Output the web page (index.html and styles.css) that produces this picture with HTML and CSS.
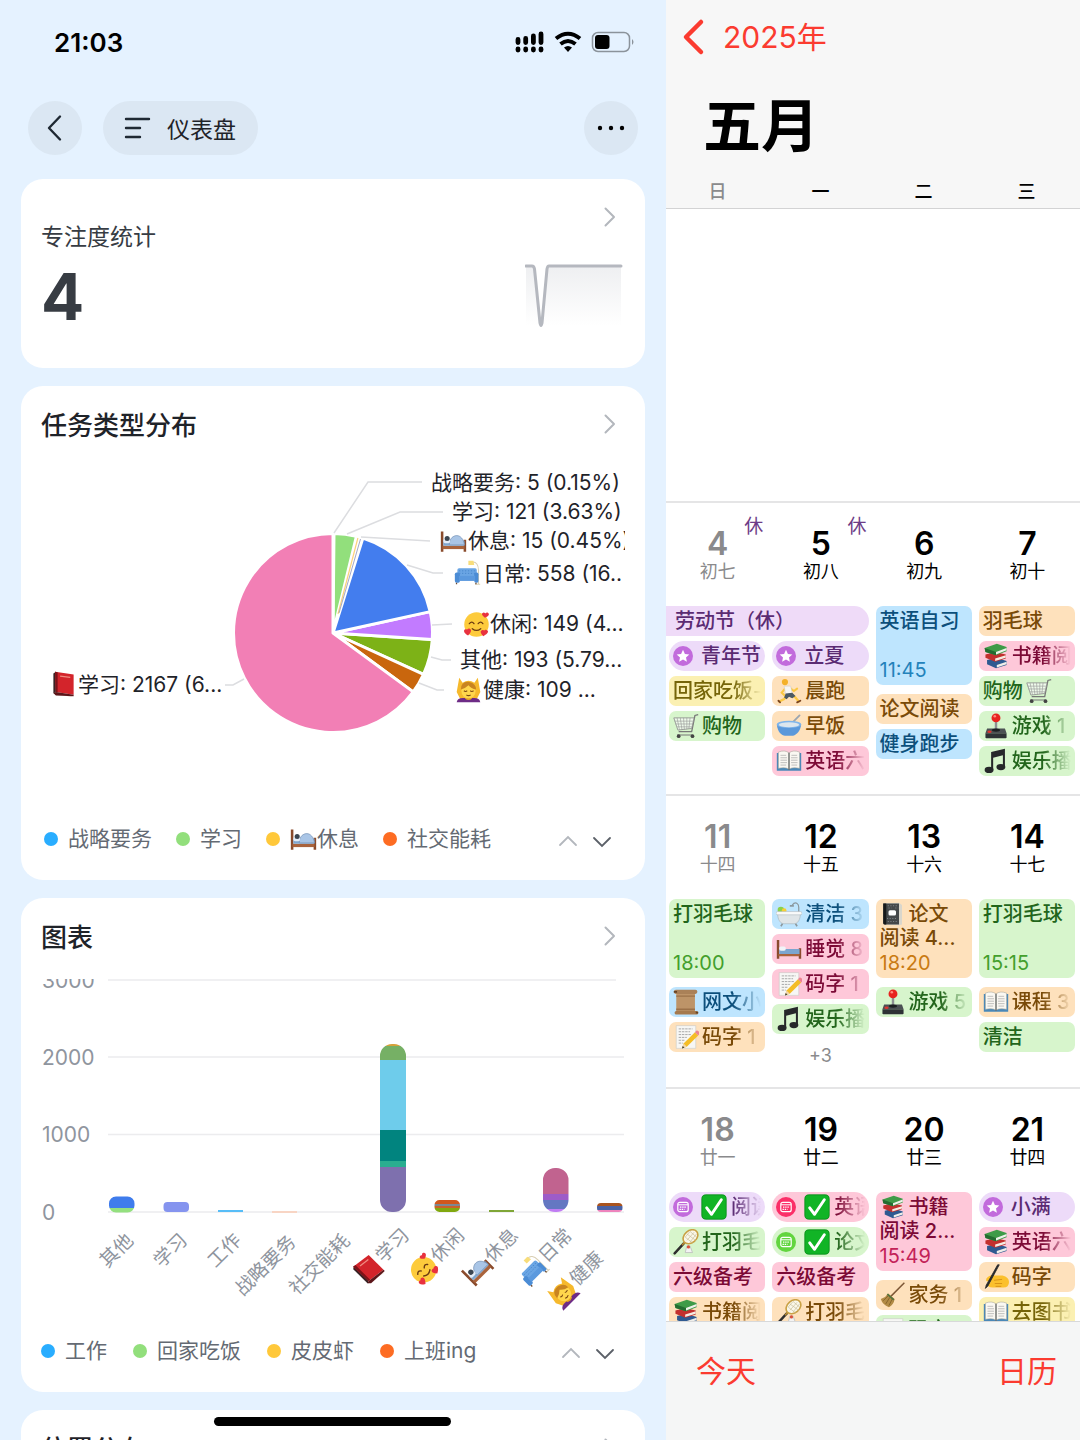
FILE: index.html
```html
<!DOCTYPE html>
<html lang="zh-CN">
<head>
    <meta charset="UTF-8">
    <meta name="viewport" content="width=device-width, initial-scale=1.0">
    <title>仪表盘</title>
    <link rel="stylesheet" href="styles.css">
</head>
<body>
<!-- Icon set -->
<svg class="sprite" aria-hidden="true">
    <symbol id="right" viewBox="0 0 30 30"><path d="M10.500 6.500l8.500 8.500-8.500 8.500" fill="none" stroke="currentColor" stroke-width="2" stroke-linecap="round" stroke-linejoin="round"/></symbol>
    <symbol id="up" viewBox="0 0 30 30"><path d="M7 21l8-8 8 8" fill="none" stroke="currentColor" stroke-width="1.800" stroke-linecap="round"/></symbol>
    <symbol id="down" viewBox="0 0 30 30"><path d="M7 14l8 8 8-8" fill="none" stroke="currentColor" stroke-width="1.800" stroke-linecap="round"/></symbol>
    <symbol id="star" viewBox="0 0 20 20">
        <circle cx="10" cy="10" r="10" fill="#c26bdc"/>
        <path d="M10 3.800l1.900 4.100 4.400.500-3.300 3 .900 4.400-3.900-2.200-3.900 2.200.900-4.400-3.300-3 4.400-.500z" fill="#fff"/>
    </symbol>
    <symbol id="cal" viewBox="0 0 20 20">
        <circle cx="10" cy="10" r="10" fill="currentColor"/>
        <rect x="4.800" y="5.300" width="10.400" height="9.400" rx="2" fill="none" stroke="#fff" stroke-width="1.200"/>
        <path d="M5 7.800h10" stroke="#fff"/>
        <path d="M7 10.200h6.500M6.500 12.300h5" stroke="#fff" stroke-width="1.300" stroke-dasharray="1.400 .8"/>
    </symbol>
    <symbol id="redbook" viewBox="0 0 32 32">
        <path d="M4 3l3-2v27l-3-2z" fill="#3a2224"/>
        <path d="M5 26l20 5 2-2-19-5z" fill="#efe6df"/>
        <path d="M6 1l22 3v24L7 25z" fill="#d3242b"/>
        <path d="M6 1l3 .5V25.300L7 25z" fill="#7d1218"/>
        <path d="M12 6l12 1.500" stroke="#f08b80" stroke-width="1.500"/>
        <path d="M4 26l3-1 21 3v2L7 29z" fill="#5c1519"/>
    </symbol>
    <symbol id="bed" viewBox="0 0 32 32">
        <path d="M1 4h3v24H1zM28 14h3v14h-3z" fill="#8a4b2c"/>
        <path d="M3 21h26v4H3z" fill="#a9633c"/>
        <path d="M4 15h25v6H4z" fill="#7fa6cf"/>
        <path d="M11 20c0-8 5-11 9-11s8 4 9 11z" fill="#a9c5e6" stroke="#7490b5" stroke-width=".8"/>
        <rect x="4" y="13" width="8" height="5" rx="2" fill="#e5edf7"/>
        <circle cx="8.500" cy="12.500" r="3" fill="#3b4652"/>
    </symbol>
    <symbol id="emptybed" viewBox="0 0 32 32">
        <path d="M1 5h3v23H1zM28 15h3v13h-3z" fill="#8a4b2c"/>
        <path d="M3 22h26v3H3z" fill="#a9633c"/>
        <path d="M4 16h25v6H4z" fill="#7ba5cf"/>
        <rect x="4" y="13" width="8" height="5" rx="2" fill="#f1f4f8"/>
    </symbol>
    <symbol id="couch" viewBox="0 0 32 32">
        <path d="M20 4c7-2 9 4 9 9v17M25 30h6" fill="none" stroke="#d9cfb4" stroke-width="1.200"/>
        <path d="M17 2h6l1 5h-7z" fill="#f8dd7a"/>
        <rect x="4" y="11" width="23" height="12" rx="2" fill="#6aa5e4"/>
        <path d="M6 14h19M6 17h19" stroke="#4584c9" stroke-dasharray="1.500 2"/>
        <rect x="1" y="16" width="6" height="12" rx="2" fill="#4b8cd5"/>
        <rect x="24" y="16" width="5" height="12" rx="2" fill="#4b8cd5"/>
        <path d="M6 20h19v6H6z" fill="#5b99de"/>
        <path d="M3 28v2M26 28v2" stroke="#6b4a33" stroke-width="1.500"/>
    </symbol>
    <symbol id="love" viewBox="0 0 32 32">
        <circle cx="16" cy="16" r="14.500" fill="#fdcb3c"/>
        <path d="M7.500 15q3-3.500 5.500 0M18 15q3-3.500 5.500 0M11 21q5 4 10 0" fill="none" stroke="#6b3b12" stroke-width="1.600" stroke-linecap="round"/>
        <path d="M26 8c-3-2-5-5-2-6 1.500-.5 2.500 1 2.500 1s1-2 3-1c3 2 0 5-3.500 6zM6 29c-4-2-6-5-4-7 1.500-1 3 0 3 0s1-2 3-1c3 1 1 5-2 8zM24 30c-3-3-4-6-2-7s3 0 3 0 2-2 4 0-1 5-5 7z" fill="#e8323f"/>
    </symbol>
    <symbol id="massage" viewBox="0 0 32 32">
        <path d="M5 2l4 6q7-5 14 0l4-6 3 17-4 8H6l-4-8z" fill="#f6b92c"/>
        <path d="M2 31q1-5 7-5h14q6 0 7 5z" fill="#6e2c86"/>
        <path d="M12 22h8v5q-4 3-8 0z" fill="#e8a521"/>
        <ellipse cx="16" cy="17.500" rx="8.500" ry="9" fill="#ffd64c"/>
        <path d="M7 16Q7 6 17 7q8 2 8 9-6-1-9-5-4 4-9 5z" fill="#c98420"/>
        <path d="M10.500 17.500q2 1.500 4 0M18 17.500q2 1.500 4 0M13.500 22.500q2.500 1.500 5 0" fill="none" stroke="#7a4512" stroke-width="1.200"/>
    </symbol>
    <symbol id="cart" viewBox="0 0 32 32">
        <path d="M31 2l-4 1-4 20H7" fill="none" stroke="#777" stroke-width="1.600"/>
        <path d="M1 6h25l-3 13-17 2z" fill="#fff" fill-opacity=".6" stroke="#8a8a8a"/>
        <path d="M5 6l3 15M9 6l2 14.500M13 6l1 14.500M17 6v14M21 6l-1.500 13.500M2 10h23M3 13.500h21M5 17h18" stroke="#999" stroke-width=".8"/>
        <path d="M5 27h19" stroke="#777" stroke-width="1.300"/>
        <circle cx="7" cy="28.500" r="2.300" fill="#444"/><circle cx="24" cy="28.500" r="2.300" fill="#444"/>
    </symbol>
    <symbol id="runner" viewBox="0 0 32 32">
        <circle cx="11" cy="5" r="3.800" fill="#f4b12a"/>
        <path d="M12 12l-5 6 3 3M17 12l5 4 4-3" fill="none" stroke="#fbc843" stroke-width="2.500" stroke-linecap="round"/>
        <path d="M13 21l-3 5-6 3M19 20l5 4 4 5" fill="none" stroke="#fbc843" stroke-width="2.800" stroke-linecap="round"/>
        <path d="M10 10l8 0 2 9-8 2z" fill="#f6f6f6" stroke="#c9c9c9" stroke-width=".6"/>
        <path d="M12 19l8-1 4 4-4 3-4-2-3 3-3-2z" fill="#4b5963"/>
        <path d="M3 28l2 2M26 30l4-2" stroke="#7a4420" stroke-width="2.200" stroke-linecap="round"/>
    </symbol>
    <symbol id="bowl" viewBox="0 0 32 32">
        <path d="M18 14L29 3" stroke="#9aa5b0" stroke-width="2.200" stroke-linecap="round"/>
        <path d="M1 14c1 10 6 13 10 14h10c5-2 9-6 10-14z" fill="#5b98da"/>
        <ellipse cx="16" cy="14" rx="15" ry="4.500" fill="#7fb4ea"/>
        <ellipse cx="16" cy="14.500" rx="12.500" ry="3" fill="#dce6ee"/>
    </symbol>
    <symbol id="openbook" viewBox="0 0 32 32">
        <path d="M1 6h30v22H1z" fill="#4a88b8"/>
        <path d="M3 5q8-3 13 1v20q-5-3-13-1zM29 5q-8-3-13 1v20q5-3 13-1z" fill="#faf8f2" stroke="#a9a69c" stroke-width=".7"/>
        <path d="M5.500 9h7M5.500 12h8M5.500 15h8M5.500 18h8M5.500 21h7M19 9h7M18.500 12h8M18.500 15h8M18.500 18h8M19 21h7" stroke="#aaa" stroke-width=".9"/>
        <path d="M16 6v21" stroke="#55585a" stroke-width="1.200"/>
    </symbol>
    <symbol id="books" viewBox="0 0 32 32">
        <path d="M5 21l12-3 12 4v5l-13 4-11-5z" fill="#2f5a91"/>
        <path d="M17 27l12-4v3l-12 4z" fill="#f0eee9"/>
        <path d="M3 14l12-3 13 3v5l-13 4-12-5z" fill="#c2302e"/>
        <path d="M15 19l13-4v3l-13 4z" fill="#f4ebe2"/>
        <path d="M2 6l15-5 12 4v5l-13 5L3 11z" fill="#3f9b48"/>
        <path d="M16 11l13-5v3l-13 5z" fill="#eef2ea"/>
        <path d="M2 6l1 5 13 4v-4z" fill="#246c31"/>
    </symbol>
    <symbol id="joystick" viewBox="0 0 32 32">
        <path d="M16 9v12" stroke="#8d9093" stroke-width="3"/>
        <circle cx="16" cy="6" r="5.500" fill="#e8231f"/><circle cx="14.500" cy="4" r="1.600" fill="#ff8a7e"/>
        <path d="M5 19h22l2 6H3z" fill="#4c5154"/>
        <path d="M3 25h26v5q0 1-1 1H4q-1 0-1-1z" fill="#2e3235"/>
        <ellipse cx="16" cy="21" rx="5" ry="2" fill="#1d2022"/>
        <ellipse cx="8" cy="23" rx="2.600" ry="1.500" fill="#de3530"/>
    </symbol>
    <symbol id="music" viewBox="0 0 32 32">
        <path d="M10 5l17-4v22h-2.500V9L12.500 12v15H10z" fill="#26282a"/>
        <ellipse cx="7.500" cy="27" rx="5.500" ry="3.800" fill="#26282a"/>
        <ellipse cx="22" cy="23.500" rx="5.500" ry="3.800" fill="#26282a"/>
    </symbol>
    <symbol id="bath" viewBox="0 0 32 32">
        <path d="M20 5q3-4 6-2 2 1 2 5v8" fill="none" stroke="#8b989f" stroke-width="1.500"/>
        <path d="M17 6h5" stroke="#8b989f" stroke-width="2"/>
        <circle cx="6" cy="11" r="4" fill="#8bd14c"/><circle cx="10" cy="12" r="3" fill="#f6cf37"/>
        <path d="M2 15c0 9 4 13 8 13h12c5 0 8-5 8-13z" fill="#dfe5e8" stroke="#a3afb4" stroke-width=".7"/>
        <rect x="0" y="13" width="32" height="4" rx="2" fill="#f9fafa" stroke="#a3afb4" stroke-width=".6"/>
        <path d="M8 28l-2 3M24 28l2 3" stroke="#8e989c" stroke-width="2"/>
    </symbol>
    <symbol id="memo" viewBox="0 0 32 32">
        <path d="M4 2h24v28H4z" fill="#f7f7f5" stroke="#c9c9c4" stroke-width=".7"/>
        <path d="M7 6h17M7 9.500h14M7 13h16M7 16.500h10M7 20h7M7 23.500h5" stroke="#999" stroke-dasharray="3 1"/>
        <path d="M13 24L27 10l4 4-14 14-6 2z" fill="#f4bd27"/>
        <path d="M27 10l2-2q3 0 4 4l-2 2z" fill="#ee8390"/>
        <path d="M13 24l4 4-6 2z" fill="#f0d6ac"/><path d="M12 27l2 2-3 1z" fill="#333"/>
    </symbol>
    <symbol id="notebook" viewBox="0 0 32 32">
        <path d="M4 2l20-1 4 3v26l-4 1-18-1z" fill="#d9d6cc"/>
        <path d="M3 2h21v28H5q-2 0-2-2z" fill="#45484a"/>
        <path d="M3 2h4v28q-4 0-4-2z" fill="#17191a"/>
        <path d="M9 5h13M8 22h14M9 26h13M10 8h4M19 8h4" stroke="#92969a" stroke-dasharray="1.500 2"/>
        <rect x="10" y="11" width="10" height="7" rx="2" fill="#fff"/>
    </symbol>
    <symbol id="scroll" viewBox="0 0 32 32">
        <path d="M4 3h23v26H4z" fill="#bd9468"/>
        <path d="M4 8h23v1.500H4zM4 24h23v2H4z" fill="#9b7148"/>
        <rect x="1" y="1" width="29" height="5" rx="2.500" fill="#aa8158"/>
        <rect x="2" y="27" width="29" height="4.500" rx="2" fill="#a5794d"/>
        <path d="M1 3.500h4M28 29h3" stroke="#654325" stroke-width="2"/>
    </symbol>
    <symbol id="racket" viewBox="0 0 32 32">
        <path d="M13 18L2 30" stroke="#2e2e2e" stroke-width="3" stroke-linecap="round"/>
        <path d="M16 15l-5 5" stroke="#b8892f" stroke-width="2"/>
        <ellipse cx="21.500" cy="9.500" rx="10" ry="7.500" transform="rotate(-40 21.500 9.500)" fill="#faf7e9" stroke="#c9a145" stroke-width="2"/>
        <path d="M15 10l9 7M17 6l11 8M21 3l8 7M17 14l9-10M21 16l8-10M15 10l6-7" stroke="#c6bc96" stroke-width=".8"/>
        <path d="M17 21l4 0 3 8h-9z" fill="#f3f3f3" stroke="#bcbcbc"/><circle cx="19" cy="22" r="2" fill="#d95039"/>
    </symbol>
    <symbol id="check" viewBox="0 0 32 32">
        <rect x="1" y="1" width="30" height="30" rx="5" fill="#11b426" stroke="#078b19"/>
        <path d="M7 17l6 8L25 7" fill="none" stroke="#fff" stroke-width="3.600" stroke-linecap="round" stroke-linejoin="round"/>
    </symbol>
    <symbol id="broom" viewBox="0 0 32 32">
        <path d="M13 18L30 1" stroke="#7d5635" stroke-width="1.800"/>
        <path d="M10 14l8 7q-1 7-7 10Q3 28 1 21q6-2 9-7z" fill="#b28b46"/>
        <path d="M10 17l-6 6M12 19l-5 8M15 21l-4 8" stroke="#7e5d26"/>
        <path d="M9 15l8 7" stroke="#53733e" stroke-width="2"/>
    </symbol>
    <symbol id="writing" viewBox="0 0 32 32">
        <path d="M4 18q5-6 11-4l9 0q8 2 8 8 0 7-7 7H12q-7 0-7-5l5-2-6-1z" fill="#fbc02d"/>
        <path d="M14 20l9-1M15 24h8M16 27.500h6" stroke="#d28a12" stroke-linecap="round"/>
        <path d="M20 1L6 27l-3 3 1-4L18 1z" fill="#26282b" stroke="#26282b"/>
    </symbol>
</svg>

<main class="screens">
    <section class="dashboard">
        <header class="status-bar">
            <span class="clock">21:03</span>
            <svg width="120" height="24" viewBox="0 0 120 24" aria-hidden="true">
                <path d="M3 9.500v3M10.700 8.500v4M18.400 6v6.500M26 4v8.500M3 19v1M10.700 19v1M18.400 19v1M26 19v1" stroke="#000" stroke-width="4.800" stroke-linecap="round"/>
                <path d="M41 8.500q12-9.500 24 0M45.500 14q7.500-6 15 0" fill="none" stroke="#000" stroke-width="4"/>
                <path d="M49 17.500q4-3 8 0l-4 4.500z"/>
                <rect x="77.500" y="2.500" width="37" height="19" rx="5.500" fill="none" stroke="#8b939b" stroke-width="1.500"/>
                <rect x="80" y="5" width="14.500" height="14" rx="3"/>
                <path d="M117 9q3 3 0 6z" fill="#8b939b"/>
            </svg>
        </header>
        <nav class="toolbar">
            <button class="round-btn" aria-label="返回">
                <svg width="30" height="30" viewBox="0 0 30 30"><path d="M20 3.500L9 15l11 11.500" fill="none" stroke="#1f2933" stroke-width="2.400" stroke-linecap="round" stroke-linejoin="round"/></svg>
            </button>
            <button class="menu-btn">
                <svg width="28" height="24" viewBox="0 0 28 24"><path d="M3 3h23M3 12h14M3 21h14" stroke="#1f2933" stroke-width="2.400" stroke-linecap="round"/></svg>
                仪表盘
            </button>
            <button class="round-btn more-btn" aria-label="更多">
                <svg width="30" height="30" viewBox="0 0 30 30"><circle cx="4" cy="15" r="2.200"/><circle cx="15" cy="15" r="2.200"/><circle cx="26" cy="15" r="2.200"/></svg>
            </button>
        </nav>

        <article class="card focus-card">
            <div>
                <h2 class="focus-label">专注度统计</h2>
                <p class="focus-value">4</p>
            </div>
            <div class="focus-side">
                <button class="icon-btn" aria-label="查看"><svg><use href="#right"/></svg></button>
                <svg class="spark" viewBox="0 0 100 68">
                    <defs>
                        <linearGradient id="fade" x1="0" y1="0" x2="0" y2="1">
                            <stop offset="0" stop-color="#eeeff1"/>
                            <stop offset="1" stop-color="#fff"/>
                        </linearGradient>
                    </defs>
                    <path d="M1 4h8L16 63 23 4h73v60H1z" fill="url(#fade)"/>
                    <path d="M1 4h6q2 0 2.500 3L15 61q1 5 2 0L22 7q.500-3 2-3h72" fill="none" stroke="#b5b8bf" stroke-width="3" stroke-linecap="round" stroke-linejoin="round"/>
                </svg>
            </div>
        </article>

        <article class="card">
            <div class="card-head">
                <h2>任务类型分布</h2>
                <button class="icon-btn" aria-label="查看"><svg><use href="#right"/></svg></button>
            </div>
            <svg class="chart pie-chart" viewBox="0 0 584 360">
                <g class="slices">
                    <path d="M292 181V81.500H293z" fill="#29a8ff"/>
                    <path d="M292 181L293 81.500A99.500 99.500 0 0 1 315.400 84.300z" fill="#92df7c"/>
                    <path d="M292 181L391.300 187.400A99.500 99.500 0 0 1 382.500 222.300z" fill="#7db217"/>
                    <path d="M292 181L382.500 222.300A99.500 99.500 0 0 1 372.200 239.900z" fill="#c9660d"/>
                    <path d="M292 181L389.200 159.600A99.500 99.500 0 0 1 391.300 187.400z" fill="#c27bff"/>
                    <path d="M292 181L321.900 86.100A99.500 99.500 0 0 1 389.200 159.600z" fill="#437dee"/>
                    <path d="M292 181L372.200 239.900A99.500 99.500 0 1 1 292 81.500z" fill="#f27fb5"/>
                </g>
                <path d="M297 162L316.900 86" stroke="#fbd27c" stroke-width="1.200"/>
                <path d="M298 161L319.500 87" stroke="#8b93ba" stroke-width=".8"/>
                <path class="leader" d="M293 81L327 30H381M306 82L359 60H402M320 85L389 89M366 113L392 121H402M391 173L411 172M390 205L401 208H410M378 231L396 238H403M203 227L192 233H184"/>
                <text x="390" y="38">战略要务: 5 (0.15%)</text>
                <text x="411" y="67">学习: 121 (3.63%)</text>
                <use href="#bed" x="399" y="76" width="27" height="27"/>
                <text x="427" y="96">休息: 15 (0.45%)</text>
                <use href="#couch" x="413" y="107" width="27" height="27"/>
                <text x="442" y="129">日常: 558 (16..</text>
                <use href="#love" x="422" y="159" width="27" height="27"/>
                <text x="449" y="179">休闲: 149 (4...</text>
                <text x="419" y="215">其他: 193 (5.79...</text>
                <use href="#massage" x="414" y="224" width="27" height="27"/>
                <text x="442" y="245">健康: 109 ...</text>
                <use href="#redbook" x="9" y="219" width="27" height="27"/>
                <text x="37" y="240">学习: 2167 (6...</text>
            </svg>
            <div class="legend-row pie-legend">
                <ul class="legend">
                    <li class="c-blue">战略要务</li>
                    <li class="c-green">学习</li>
                    <li class="c-yellow"><svg><use href="#bed"/></svg>休息</li>
                    <li class="c-orange">社交能耗</li>
                </ul>
                <button class="icon-btn" aria-label="上一页"><svg><use href="#up"/></svg></button>
                <button class="icon-btn dark" aria-label="下一页"><svg><use href="#down"/></svg></button>
            </div>
        </article>

        <article class="card">
            <div class="card-head">
                <h2>图表</h2>
                <button class="icon-btn" aria-label="查看"><svg><use href="#right"/></svg></button>
            </div>
            <svg class="chart bar-chart" viewBox="0 0 584 345">
                <defs>
                    <clipPath id="bars">
                        <rect x="68" y="217.500" width="25.500" height="16" rx="7"/>
                        <rect x="122.500" y="223" width="25.500" height="10" rx="4"/>
                        <rect x="339" y="65" width="26" height="168" rx="12"/>
                        <rect x="393.500" y="221" width="25.500" height="12" rx="5"/>
                        <rect x="502" y="189" width="25.500" height="44" rx="12"/>
                        <rect x="556" y="224" width="25.500" height="9" rx="4"/>
                    </clipPath>
                </defs>
                <path d="M67 1h508M67 78h516M67 155.500h516M67 233h516" stroke="#ececee" stroke-width="1.500"/>
                <g class="ticks">
                    <text x="1" y="9">3000</text>
                    <text x="1" y="86">2000</text>
                    <text x="1" y="163">1000</text>
                    <text x="1" y="241">0</text>
                </g>
                <g clip-path="url(#bars)">
                    <path d="M68 217h26v12H68z" fill="#3f7cec"/>
                    <path d="M68 229h26v5H68z" fill="#94e07f"/>
                    <path d="M122 222h27v12h-27z" fill="#8594ef"/>
                    <path d="M339 65h26v2h-26z" fill="#d6a13a"/>
                    <path d="M339 67h26v14h-26z" fill="#76b065"/>
                    <path d="M339 81h26v70h-26z" fill="#6ecceb"/>
                    <path d="M339 151h26v31h-26z" fill="#01847f"/>
                    <path d="M339 182h26v6h-26z" fill="#2aae90"/>
                    <path d="M339 188h26v46h-26z" fill="#7e70ae"/>
                    <path d="M393 221h27v4h-27z" fill="#d0571c"/>
                    <path d="M393 225h27v2h-27z" fill="#7d8791"/>
                    <path d="M393 227h27v2h-27z" fill="#c8622a"/>
                    <path d="M393 229h27v5h-27z" fill="#81a80f"/>
                    <path d="M502 189h26v26h-26z" fill="#c1638f"/>
                    <path d="M502 215h26v6h-26z" fill="#9d5cc8"/>
                    <path d="M502 221h26v9h-26z" fill="#6477c2"/>
                    <path d="M502 230h26v4h-26z" fill="#c07cf3"/>
                    <path d="M556 224h26v3h-26z" fill="#a9531e"/>
                    <path d="M556 227h26v4h-26z" fill="#4a62a5"/>
                    <path d="M556 231h26v3h-26z" fill="#ee84bd"/>
                </g>
                <path d="M177 232h25" stroke="#57bdf7" stroke-width="2"/>
                <path d="M231 233h25" stroke="#fbcdb5" stroke-width="1.500"/>
                <path d="M448 232h25" stroke="#7fa637" stroke-width="2"/>
                <g class="x-labels">
                    <g transform="translate(75 271) rotate(-45)"><text y="7">其他</text></g>
                    <g transform="translate(129 271) rotate(-45)"><text y="7">学习</text></g>
                    <g transform="translate(183 271) rotate(-45)"><text y="7">工作</text></g>
                    <g transform="translate(224 286) rotate(-45)"><text y="7">战略要务</text></g>
                    <g transform="translate(278 285) rotate(-45)"><text y="7">社交能耗</text></g>
                    <g transform="translate(351 266) rotate(-45)"><text y="7">学习</text><use href="#redbook" x="-48" y="-13" width="28" height="28"/></g>
                    <g transform="translate(406 266) rotate(-45)"><text y="7">休闲</text><use href="#love" x="-48" y="-13" width="28" height="28"/></g>
                    <g transform="translate(460 266) rotate(-45)"><text y="7">休息</text><use href="#bed" x="-48" y="-13" width="28" height="28"/></g>
                    <g transform="translate(514 266) rotate(-45)"><text y="7">日常</text><use href="#couch" x="-48" y="-13" width="28" height="28"/></g>
                    <g transform="translate(545 289) rotate(-45)"><text y="7">健康</text><use href="#massage" x="-48" y="-13" width="28" height="28"/></g>
                </g>
            </svg>
            <div class="legend-row">
                <ul class="legend">
                    <li class="c-blue">工作</li>
                    <li class="c-green">回家吃饭</li>
                    <li class="c-yellow">皮皮虾</li>
                    <li class="c-orange">上班ing</li>
                </ul>
                <button class="icon-btn" aria-label="上一页"><svg><use href="#up"/></svg></button>
                <button class="icon-btn dark" aria-label="下一页"><svg><use href="#down"/></svg></button>
            </div>
        </article>

        <article class="card">
            <div class="card-head">
                <h2>位置分布</h2>
                <button class="icon-btn" aria-label="查看"><svg><use href="#right"/></svg></button>
            </div>
        </article>
        <div class="home-indicator"></div>
    </section>

    <section class="calendar">
        <header class="month-head">
            <button class="year-btn">
                <svg width="24" height="38" viewBox="0 0 24 38"><path d="M20 4L5 19l15 15" fill="none" stroke="currentColor" stroke-width="4.500" stroke-linecap="round" stroke-linejoin="round"/></svg>
                2025年
            </button>
            <h1>五月</h1>
            <div class="weekdays">
                <span class="sunday">日</span>
                <span>一</span>
                <span>二</span>
                <span>三</span>
            </div>
        </header>

        <div class="weeks">
            <div class="week empty"></div>

            <div class="week">
                <div class="day sunday"><b>4</b>初七<i class="rest">休</i></div>
                <div class="day"><b>5</b>初八<i class="rest">休</i></div>
                <div class="day"><b>6</b>初九</div>
                <div class="day"><b>7</b>初十</div>
                <div class="banner">劳动节（休）</div>
                <ul class="events below">
                    <li class="event purple pill"><svg><use href="#star"/></svg><span>青年节</span></li>
                    <li class="event yellow"><span class="fade">回家吃饭-</span></li>
                    <li class="event green"><svg><use href="#cart"/></svg><span>购物</span></li>
                </ul>
                <ul class="events below">
                    <li class="event purple pill"><svg><use href="#star"/></svg><span>立夏</span></li>
                    <li class="event orange"><svg><use href="#runner"/></svg><span>晨跑</span></li>
                    <li class="event orange"><svg><use href="#bowl"/></svg><span>早饭</span></li>
                    <li class="event pink"><svg><use href="#openbook"/></svg><span class="fade">英语六</span></li>
                </ul>
                <ul class="events tall">
                    <li class="event blue block"><span>英语自习</span><time>11:45</time></li>
                    <li class="event orange"><span>论文阅读</span></li>
                    <li class="event blue"><span>健身跑步</span></li>
                </ul>
                <ul class="events tall">
                    <li class="event orange"><span>羽毛球</span></li>
                    <li class="event pink"><svg><use href="#books"/></svg><span class="fade">书籍阅</span></li>
                    <li class="event green"><span>购物</span><svg><use href="#cart"/></svg></li>
                    <li class="event green"><svg><use href="#joystick"/></svg><span class="fade">游戏 1</span></li>
                    <li class="event green"><svg><use href="#music"/></svg><span class="fade">娱乐播</span></li>
                </ul>
            </div>

            <div class="week">
                <div class="day sunday"><b>11</b>十四</div>
                <div class="day"><b>12</b>十五</div>
                <div class="day"><b>13</b>十六</div>
                <div class="day"><b>14</b>十七</div>
                <ul class="events">
                    <li class="event green block"><span>打羽毛球</span><time>18:00</time></li>
                    <li class="event blue"><svg><use href="#scroll"/></svg><span class="fade">网文小</span></li>
                    <li class="event orange"><svg><use href="#memo"/></svg><span class="fade">码字 1</span></li>
                </ul>
                <ul class="events">
                    <li class="event blue"><svg><use href="#bath"/></svg><span class="fade">清洁 3</span></li>
                    <li class="event pink"><svg><use href="#emptybed"/></svg><span class="fade">睡觉 8</span></li>
                    <li class="event pink"><svg><use href="#memo"/></svg><span class="fade">码字 1</span></li>
                    <li class="event green"><svg><use href="#music"/></svg><span class="fade">娱乐播</span></li>
                    <li class="overflow">+3</li>
                </ul>
                <ul class="events">
                    <li class="event orange block"><span><svg><use href="#notebook"/></svg>论文<br>阅读 4...</span><time>18:20</time></li>
                    <li class="event green"><svg><use href="#joystick"/></svg><span class="fade">游戏 5</span></li>
                </ul>
                <ul class="events">
                    <li class="event green block"><span>打羽毛球</span><time>15:15</time></li>
                    <li class="event orange"><svg><use href="#openbook"/></svg><span class="fade">课程 3</span></li>
                    <li class="event green"><span>清洁</span></li>
                </ul>
            </div>

            <div class="week">
                <div class="day sunday"><b>18</b>廿一</div>
                <div class="day"><b>19</b>廿二</div>
                <div class="day"><b>20</b>廿三</div>
                <div class="day"><b>21</b>廿四</div>
                <ul class="events">
                    <li class="event purple pill"><svg class="cal-purple"><use href="#cal"/></svg><svg class="tick"><use href="#check"/></svg><span class="fade">阅读</span></li>
                    <li class="event green"><svg><use href="#racket"/></svg><span class="fade">打羽毛</span></li>
                    <li class="event pink"><span>六级备考</span></li>
                    <li class="event orange"><svg><use href="#books"/></svg><span class="fade">书籍阅</span></li>
                </ul>
                <ul class="events">
                    <li class="event pink pill"><svg class="cal-red"><use href="#cal"/></svg><svg class="tick"><use href="#check"/></svg><span class="fade">英语</span></li>
                    <li class="event green pill"><svg class="cal-green"><use href="#cal"/></svg><svg class="tick"><use href="#check"/></svg><span class="fade">论文</span></li>
                    <li class="event pink"><span>六级备考</span></li>
                    <li class="event orange"><svg><use href="#racket"/></svg><span class="fade">打羽毛</span></li>
                </ul>
                <ul class="events">
                    <li class="event pink block"><span><svg><use href="#books"/></svg>书籍<br>阅读 2...</span><time>15:49</time></li>
                    <li class="event orange"><svg><use href="#broom"/></svg><span class="fade">家务 1</span></li>
                    <li class="event green"><svg><use href="#memo"/></svg><span class="fade">码字</span></li>
                </ul>
                <ul class="events">
                    <li class="event purple pill"><svg><use href="#star"/></svg><span>小满</span></li>
                    <li class="event pink"><svg><use href="#books"/></svg><span class="fade">英语六</span></li>
                    <li class="event orange"><svg><use href="#writing"/></svg><span>码字</span></li>
                    <li class="event yellow"><svg><use href="#openbook"/></svg><span class="fade">去图书</span></li>
                </ul>
            </div>
        </div>

        <footer class="cal-footer">
            <button>今天</button>
            <button>日历</button>
        </footer>
    </section>
</main>
</body>
</html>
```

FILE: styles.css
```css
* {
  box-sizing: border-box;
}

body {
  margin: 0;
  font-family: Inter, "Noto Sans CJK SC", sans-serif;
  color: #1f2329;
}

h1, h2, p, ul {
  margin: 0;
  padding: 0;
}

ul {
  list-style: none;
}

button {
  border: 0;
  padding: 0;
  background: none;
  font: inherit;
  color: inherit;
  cursor: pointer;
}

svg {
  display: block;
  flex-shrink: 0;
}

.sprite {
  position: absolute;
  width: 0;
  height: 0;
}

.screens {
  display: grid;
  grid-template-columns: 37fr 23fr;
  height: 100vh;
  overflow: hidden;
}

/* Dashboard */
.dashboard {
  position: relative;
  min-width: 0;
  overflow: hidden;
  padding: 0 21px;
  background: #e5f2ff;
}

.status-bar {
  display: flex;
  align-items: center;
  justify-content: space-between;
  height: 84px;
  padding: 0 10px 0 33px;
}

.clock {
  font-size: 26px;
  font-weight: 600;
  color: #000;
}

.toolbar {
  display: flex;
  align-items: center;
  gap: 21px;
  padding: 17px 7px 24px;
}

.round-btn,
.menu-btn {
  display: flex;
  align-items: center;
  justify-content: center;
  height: 54px;
  border-radius: 27px;
  background: #dbe7f3;
}

.round-btn {
  width: 54px;
}

.menu-btn {
  gap: 16px;
  padding: 0 22px 0 20px;
  font-size: 23px;
}

.more-btn {
  margin-left: auto;
}

.card {
  margin-bottom: 18px;
  padding: 23px 20px 26px;
  border-radius: 22px;
  background: #fff;
}

.card-head {
  display: flex;
  align-items: center;
  justify-content: space-between;
  height: 30px;
}

.card-head h2 {
  padding-bottom: 2px;
  font-size: 26px;
  font-weight: 500;
}

.icon-btn {
  width: 30px;
  height: 30px;
  color: #b3b7bd;
}

.icon-btn svg {
  width: 30px;
  height: 30px;
}

.icon-btn.dark {
  color: #5b6068;
}

.focus-card {
  display: flex;
  justify-content: space-between;
  min-height: 187px;
}

.focus-label {
  margin-top: 20px;
  font-size: 23px;
  font-weight: 400;
  line-height: 30px;
  color: #373c43;
}

.focus-value {
  font-size: 64px;
  font-weight: 700;
  line-height: 90px;
  color: #373c43;
}

.focus-side {
  display: flex;
  flex-direction: column;
  align-items: flex-end;
  gap: 30px;
}

.spark {
  width: 100px;
  height: 68px;
}

.chart {
  width: 100%;
  overflow: hidden;
  font-size: 21px;
}

.chart text {
  fill: #1f2329;
}

.pie-chart {
  margin: 13px 0 12px;
}

.bar-chart {
  margin: 28px 0 12px;
}

.slices path {
  stroke: #fff;
  stroke-width: 3;
  stroke-linejoin: round;
}

.leader {
  fill: none;
  stroke: #dcdde0;
  stroke-width: 1.5;
}

.chart .ticks text,
.chart .x-labels text {
  fill: #8f959e;
}

.x-labels {
  font-size: 19px;
  text-anchor: middle;
}

.legend-row {
  display: flex;
  align-items: center;
  gap: 4px;
  height: 30px;
  padding-right: 5px;
}

.legend {
  display: flex;
  flex: 1;
  gap: 26px;
  font-size: 21px;
  line-height: 28px;
  color: #646a73;
}

.pie-legend {
  padding: 0 8px 0 3px;
}

.pie-legend .legend {
  gap: 24px;
}

.legend li {
  display: flex;
  align-items: center;
  white-space: nowrap;
}

.legend li::before {
  content: "";
  width: 14px;
  height: 14px;
  margin-right: 10px;
  border-radius: 50%;
}

.legend svg {
  width: 27px;
  height: 27px;
}

.legend .c-blue::before { background: #29adff; }
.legend .c-green::before { background: #92df7c; }
.legend .c-yellow::before { background: #ffc83a; }
.legend .c-orange::before { background: #fd6c23; }

.home-indicator {
  position: absolute;
  bottom: 14px;
  left: 50%;
  width: 237px;
  height: 9px;
  margin-left: -119px;
  border-radius: 5px;
  background: #000;
}

/* Calendar */
.calendar {
  display: flex;
  flex-direction: column;
  min-width: 0;
  height: 100vh;
  background: #fff;
  color: #000;
}

.month-head {
  height: 209px;
  border-bottom: 1px solid #d3d3d4;
  background: #f7f7f7;
}

.year-btn {
  display: flex;
  align-items: center;
  gap: 18px;
  height: 74px;
  padding-left: 15px;
  font-size: 30px;
  line-height: 36px;
  color: #fb3b30;
}

.month-head h1 {
  padding-left: 37px;
  font-size: 58px;
  font-weight: 700;
  line-height: 104px;
}

.weekdays {
  display: grid;
  grid-template-columns: repeat(4, 1fr);
  padding-right: 2px;
  font-size: 18px;
  font-weight: 500;
  line-height: 28px;
  text-align: center;
}

.sunday,
.weekdays .sunday {
  color: #8a8a8c;
}

.weeks {
  flex: 1;
  min-height: 0;
  overflow: hidden;
}

.week {
  display: grid;
  grid-template-columns: repeat(4, 1fr);
  grid-template-rows: auto auto 1fr;
  height: 293px;
  padding-right: 1px;
  border-bottom: 2px solid #e5e5e6;
}

.week.empty {
  height: 294px;
}

.day {
  position: relative;
  height: 103px;
  padding-top: 22px;
  font-size: 18px;
  line-height: 18px;
  text-align: center;
}

.day b {
  display: block;
  font-size: 32px;
  font-weight: 600;
  line-height: 38px;
}

.rest {
  position: absolute;
  top: 15px;
  right: 6px;
  font-size: 19px;
  font-style: normal;
  color: #6d3c87;
}

.events {
  min-width: 0;
  padding: 0 4px 0 3px;
}

.events.below {
  grid-row: 3;
}

.events.tall {
  grid-row: 2 / 4;
}

.banner {
  grid-column: 1 / 3;
  grid-row: 2;
  height: 30px;
  margin: 0 4px 5px 0;
  padding-left: 9px;
  border-radius: 0 15px 15px 0;
  background: #efdbf8;
  font-size: 20px;
  font-weight: 500;
  line-height: 30px;
  color: #5b2b73;
}

.event {
  display: flex;
  align-items: center;
  gap: 3px;
  height: 30px;
  margin-bottom: 5px;
  padding: 0 4px;
  border-radius: 7px;
  font-size: 20px;
  font-weight: 500;
  line-height: 30px;
  white-space: nowrap;
  overflow: hidden;
}

.event svg {
  width: 26px;
  height: 26px;
}

.event.pill {
  gap: 8px;
  border-radius: 15px;
}

.event.pill svg {
  width: 20px;
  height: 20px;
}

.event.pill .tick {
  width: 26px;
  height: 26px;
}

.event.pill .tick + span {
  margin-left: -4px;
}

.event.block {
  flex-direction: column;
  align-items: flex-start;
  justify-content: space-between;
  gap: 0;
  height: 79px;
  margin-bottom: 9px;
  padding: 3px 4px;
  line-height: 24px;
}

.event.block svg {
  display: inline-block;
  height: 24px;
  margin-right: 3px;
  vertical-align: top;
}

.event time {
  font-weight: 400;
}

.fade {
  flex: 1;
  min-width: 0;
  overflow: hidden;
  -webkit-mask-image: linear-gradient(to right, #000 calc(100% - 28px), transparent);
  mask-image: linear-gradient(to right, #000 calc(100% - 28px), transparent);
}

.purple { background: #eddbf9; color: #5b2b73; }
.orange { background: #fee1bc; color: #794a08; }
.pink { background: #fec8d9; color: #7c0a36; }
.green { background: #d7f5cc; color: #22651b; }
.blue { background: #bee5fe; color: #0c4f7b; }
.yellow { background: #fbf0b2; color: #756408; }

.orange time { color: #c97a12; }
.pink time { color: #c32258; }
.green time { color: #439f2d; }
.blue time { color: #2382bb; }

.cal-purple { color: #c26bdc; }
.cal-red { color: #fb2f68; }
.cal-green { color: #62d53f; }

.overflow {
  font-size: 18px;
  line-height: 34px;
  text-align: center;
  color: #8a8a8c;
}

.cal-footer {
  display: flex;
  align-items: flex-start;
  justify-content: space-between;
  height: 119px;
  padding: 30px 23px 0 30px;
  border-top: 1px solid #d8d9da;
  background: #f5f6f6;
  font-size: 30px;
  line-height: 38px;
  color: #fb3b30;
}
```
